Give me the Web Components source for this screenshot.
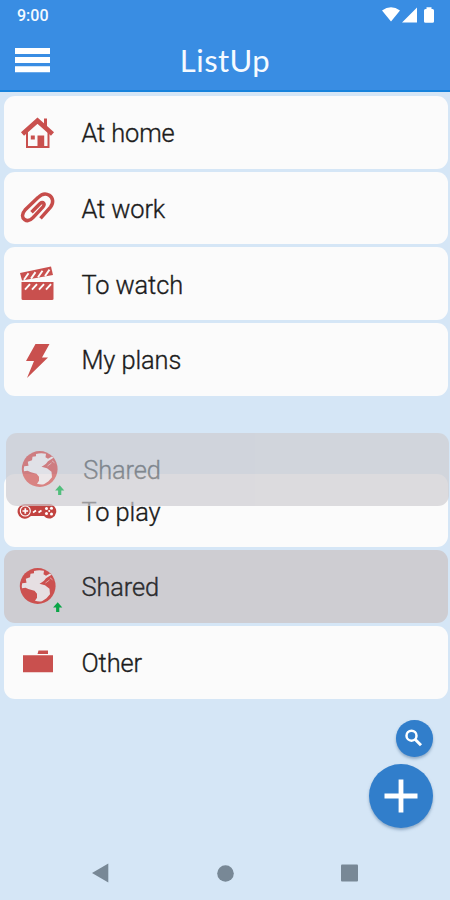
<!DOCTYPE html>
<html lang="en"><head><meta charset="utf-8"><title>ListUp</title>
<style>html,body{margin:0;height:100%}body{font-family:Roboto,sans-serif;background:#d5e6f6;overflow:hidden}</style></head>
<body><list-app></list-app>
<script>
const icons={
home:`<path d="M22.500 134l15-13.300L52.500 134" fill="none" stroke="#c9504e" stroke-width="4.600"/><path d="M44 118.500h3v9l-3-2.500z" fill="#c9504e"/><path d="M27 132v15h21.500V132" fill="none" stroke="#c9504e" stroke-width="2"/><path d="M37.500 135.500h6.700v12h-6.700zM30.800 135.500h4v4h-4z" fill="#c9504e"/>`,
clip:`<path d="M40.500 218L50.500 206.800C54 202.500 53 197.300 49.300 194.900C45 192.300 40.700 194.500 38 197.300L25 209.800C21.500 213.500 22 217.500 24.500 219.200C27.500 221.400 30.700 219.800 33 217.300L43 206.600C45.500 203.700 43 200.800 40.300 203L31.500 212" fill="none" stroke="#c64c4a" stroke-width="3.500"/>`,
film:`<path d="M20 273.500L51 267L53 275.500L22 281z" fill="#c9504e"/><path d="M21.500 282.500H53.500V299.500Q53.500 300.500 52 300.500H23Q21.500 300.500 21.500 299z" fill="#c9504e"/><path d="M24 280.200l4.500-6.500M31 279l4.500-6.500M38 277.700l4.500-6.500M45 276.500l4.500-6.500M25 290l5-5.500M32 290l5-5.500M39 290l5-5.500M46 290l5-5.500" stroke="#fbfbfb" stroke-width="1.900"/>`,
bolt:`<path d="M35.500 344h14l-7.500 13.500h6L27 378l7-17h-8z" fill="#c9504e"/>`,
globe:`<circle cx="37.700" cy="586.200" r="17.900" fill="#cc5150"/><path d="M34 571.200Q39 569.800 44 571L43.500 574.500L46 576L50 573.800L51.500 575L46 578.500L44 581L42 582.500L39.500 584L45 585.500L49.500 589L50 594.500L46.500 598.500L42 601.500Q38.500 602.200 35 601L37 598L37 594L34.500 591L29 589.500L25.500 588L22 588.500Q21.500 586 22.200 583.500L26.500 583L25.800 579L30 577.500L30.500 574L34 573.500z" fill="#e6dfe2"/><path d="M45.500 583.200l4-3M50 578l2.500 2" stroke="#dfa5a6" stroke-width="1"/><path d="M57.700 602.500l4.600 5.200h-3v4.600h-3.200v-4.600h-3z" fill="#0aa547"/>`,
game:`<path d="M25 504.600H48.500A7.200 7.200 0 1 1 46 518.300L44 516.500H31L28 518.500A7.300 7.300 0 1 1 25 504.600z" fill="#c24340"/><circle cx="25.300" cy="511.500" r="5" fill="none" stroke="#fff" stroke-width="1.100"/><path d="M22.500 511.500h5.600M25.300 508.700v5.600M33 513l3-2M38.500 513l3-2" stroke="#fff" stroke-width="1.700"/><g fill="#fff"><circle cx="46.500" cy="509" r="1.500"/><circle cx="51.500" cy="508.800" r="1.500"/><circle cx="46.500" cy="514" r="1.500"/><circle cx="51.500" cy="514.500" r="1.500"/><circle cx="49.200" cy="511.500" r="1"/></g>`,
bag:`<path d="M23 655.200H53V672.200H23zM38.500 650.300H48V654H37.500z" fill="#c9504e"/>`};
const tops={home:96,clip:171.7,film:247.4,bolt:323.1,game:474.500,globe:550.200,bag:625.900};
const define=(name,html)=>customElements.define(name,class extends HTMLElement{
 constructor(){super();this.attachShadow({mode:'open'}).innerHTML=html}});
customElements.define('list-icon',class extends HTMLElement{
 static observedAttributes=['name'];
 constructor(){super();this.attachShadow({mode:'open'})}
 attributeChangedCallback(a,b,n){this.shadowRoot.innerHTML=`<style>:host,svg{display:block}:host{width:60px;height:72.700px}</style><svg width="60" height="72.700" viewBox="4 ${tops[n]} 60 72.700">${icons[n]}</svg>`}});
define('list-card',`<style>:host{display:flex;align-items:center;box-sizing:border-box;height:72.700px;border-radius:11px;background:#fbfbfb;color:#1c1c1c;font-size:25.400px;line-height:30px;font-weight:300;-webkit-text-stroke:.35px currentColor;letter-spacing:-.1px}
:host([shared]){background:#cecdd2;color:#2c2c2e}:host(.float){color:#5b5e63}list-icon{flex:none;margin-right:17.500px}.label{white-space:nowrap;padding-top:2px}</style><list-icon></list-icon><span class="label"><slot></slot></span>`);
define('status-bar',`<style>:host{display:flex;height:30px;padding:0 15px 0 17px;align-items:center;justify-content:space-between;color:#f4faff;font-size:16px;font-weight:500;box-sizing:border-box}svg{display:block}</style><span>9:00</span><svg width="54" height="18" viewBox="381 5 54 18"><path fill="#fff" d="M382 9.500Q391 3 400 9.500L391 20.500zM402 21.500l15-15v15zM424 9.500q0-1.500 1.500-1.500h1V6.300h5V8h1q1.500 0 1.500 1.500v11q0 1.300-1.500 1.300h-7q-1.500 0-1.500-1.300z"/></svg>`);
define('app-bar',`<style>:host{display:grid;grid-template-columns:48px 1fr 48px;height:62px;align-items:center;border-bottom:2px solid #1682dc;box-sizing:border-box;color:#f5faff}svg{display:block;margin-left:15px}h1{margin:0;text-align:center;font:400 31px/40px Lato,sans-serif;letter-spacing:.5px}</style><svg width="35" height="25" viewBox="0 0 35 25"><path fill="#fff" d="M0 0h35v6H0zM0 9h35v6H0zM0 18.200h35v6H0z"/></svg><h1><slot></slot></h1><i></i>`);
define('round-button',`<style>:host{display:grid;place-items:center;border-radius:50%;background:#317ecb;box-shadow:0 2px 3px #6284a699;width:var(--size);height:var(--size)}</style><slot></slot>`);
define('nav-bar',`<style>:host{display:flex;align-items:center;justify-content:space-between;padding:0 92px;height:54px;box-sizing:border-box}svg{display:block}</style><svg width="17" height="20" viewBox="0 0 17 20"><path d="M0 10L16.300.500v19z" fill="#788896"/></svg><svg width="17" height="17"><circle cx="8.500" cy="8.500" r="8.300" fill="#788896"/></svg><svg width="17" height="18"><rect y=".500" width="17" height="17" rx="1" fill="#788896"/></svg>`);
customElements.define('list-app',class extends HTMLElement{constructor(){super();
 this.attachShadow({mode:'open'}).innerHTML=`<style>:host{display:flex;flex-direction:column;height:900px;width:450px;position:relative;background:#d5e6f6}
 header{background:#398de3;height:92px}main{display:flex;flex-direction:column;gap:3px;padding:4px 2.500px 0 4px;flex:1}
 .gap{height:72.700px}.float{position:absolute;left:5.700px;top:433px;width:443px;opacity:.7}
 aside{position:absolute;right:17.500px;top:720px;display:flex;flex-direction:column;align-items:flex-end;gap:7px}aside svg{display:block}</style>
 <header><status-bar></status-bar><app-bar>ListUp</app-bar></header>
 <main>${[['home','At home'],['clip','At work'],['film','To watch'],['bolt','My plans'],null,['game','To play'],['globe','Shared'],['bag','Other']].map(r=>r?`<list-card icon="${r[0]}" ${r[0]=='globe'?'shared':''}>${r[1]}</list-card>`:'<div class="gap"></div>').join('')}</main>
 <nav-bar></nav-bar>
 <list-card class="float" icon="globe" shared>Shared</list-card>
 <aside><round-button style="--size:36.500px"><svg width="20" height="20" viewBox="0 0 20 20" fill="none" stroke="#fff"><circle cx="7.500" cy="7.700" r="5" stroke-width="2.500"/><path d="M11 11.200l6 6" stroke-width="3"/></svg></round-button>
 <round-button style="--size:64px"><svg width="34" height="34" viewBox="0 0 34 34"><path d="M.500 17h33M17 .500v33" stroke="#fff" stroke-width="4.800"/></svg></round-button></aside>`;
 this.shadowRoot.querySelectorAll('list-card').forEach(c=>c.shadowRoot.querySelector('list-icon').setAttribute('name',c.getAttribute('icon')));
}});
</script></body></html>
